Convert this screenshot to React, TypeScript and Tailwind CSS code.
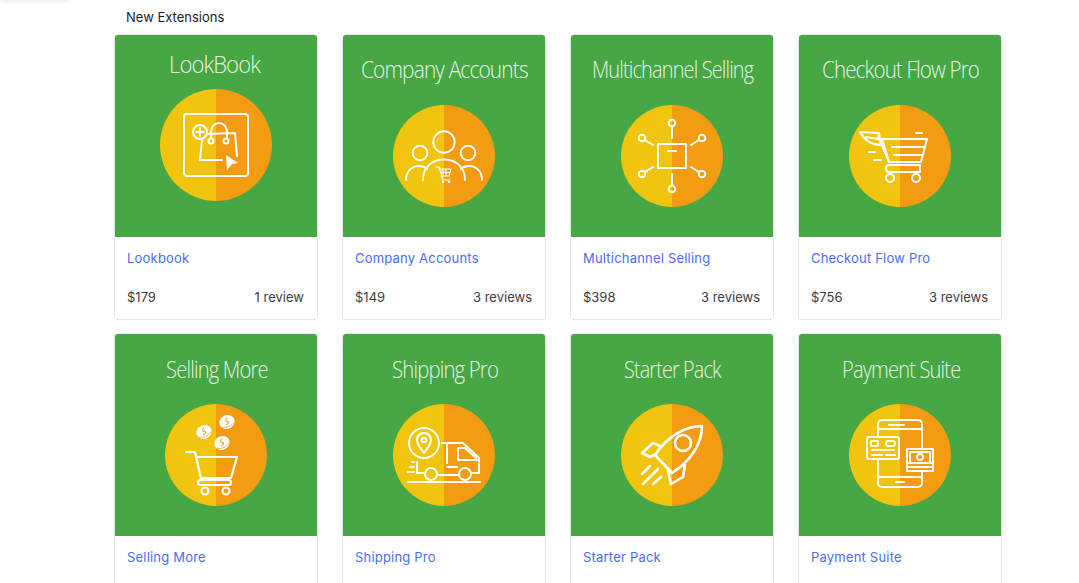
import React from "react";

const YELLOW = "#f1c40f";
const ORANGE = "#f39c12";

// ICONS (drawn around the circle's centre)
function LookBookIcon() {
  return (
    <g strokeWidth={2}>
      <rect x={-32} y={-31} width={64} height={62} rx={3} />
      <path d="M-9 -11 L19 -12 L21 11 M6 15 L-16 15 L-14 -5" />
      <circle cx={-16} cy={-13} r={7} fill={YELLOW} />
      <path d="M-20 -13 H-12 M-16 -17 V-9" />
      <path d="M-5 -7 V-12 C-5 -19 -1 -22 3 -22 C7 -22 11 -19 11 -12 V-7" />
      <circle cx={-5} cy={-4} r={2.5} />
      <circle cx={10} cy={-4} r={2.5} />
      <path d="M10 10 L22 18 L16 19 L11 25 Z" fill="#fff" stroke="none" />
    </g>
  );
}

function CompanyIcon() {
  return (
    <g strokeWidth={1.9}>
      <circle cx={0} cy={-14} r={10.7} />
      <circle cx={-24} cy={-3} r={7.3} />
      <circle cx={24} cy={-3} r={7.3} />
      <path d="M-21 24 C-21 11 -12 3.5 0 3.5 C12 3.5 21 11 21 24" />
      <path d="M-38 24 C-38 15 -32 10 -25 10 C-22 10 -19 11 -17 13" />
      <path d="M38 24 C38 15 32 10 25 10 C22 10 19 11 17 13" />
      <g strokeWidth={1.1}>
        <path d="M-8 11 H-5 L-1 24 H6" />
        <path d="M-5 13 H7 L5 20 H-3 M-3 16.5 H6 M-1 13 V20 M2 13 V20" />
        <circle cx={-1} cy={26} r={0.8} />
        <circle cx={5} cy={26} r={0.8} />
      </g>
    </g>
  );
}

function MultichannelIcon() {
  return (
    <g strokeWidth={2}>
      <rect x={-14} y={-12} width={28} height={24} />
      <path d="M-4 -5 H4" />
      <circle cx={0} cy={-33} r={3.3} />
      <circle cx={0} cy={33} r={3.3} />
      <circle cx={-30} cy={-18} r={3.3} />
      <circle cx={30} cy={-18} r={3.3} />
      <circle cx={-30} cy={18} r={3.3} />
      <circle cx={30} cy={18} r={3.3} />
      <path d="M0 -29 V-18 M0 18 V29 M-27 -16 L-19 -11 M27 -16 L19 -11 M-27 16 L-19 11 M27 16 L19 11" />
    </g>
  );
}

function CheckoutIcon() {
  return (
    <g strokeWidth={2}>
      <path d="M-18 -17 H27 L21 6 H-11 L-18 -17" />
      <path d="M-8 -9 H25 M-6 -1 H23" />
      <path d="M-22 -20 L-11 6" />
      <path d="M-40 -24 L-21 -23 L-19 -11 C-27 -11 -35 -15 -40 -24 Z M-34 -19 L-22 -17" />
      <path d="M-11 9 H20 V16 H-11 C-15 16 -15 9 -11 9 Z" />
      <circle cx={-10} cy={22} r={4} />
      <circle cx={16} cy={22} r={4} />
      <path d="M16 -23 H22 M-31 -4 H-25 M-26 4 H-19" />
    </g>
  );
}

function SellingIcon() {
  const coins = [
    [-12, -23],
    [11, -33],
    [6, -12],
  ];
  return (
    <g strokeWidth={2.2}>
      <path d="M-30 -3 H-21 L-15 24" />
      <path d="M-20 2 H21 L15 23 H-15" />
      <rect x={-18} y={25} width={33} height={5} rx={2.5} />
      <circle cx={-11} cy={36} r={3.5} />
      <circle cx={10} cy={36} r={3.5} />
      {coins.map(([x, y]) => (
        <g key={`${x}-${y}`} transform={`translate(${x} ${y}) rotate(-25)`}>
          <ellipse rx={7.8} ry={6.8} fill="#fff" stroke="none" />
          <path d="M1.5 -3.5 C-1 -3.5 -1 -0.8 0.5 -0.5 C2 -0.2 2 2 -1.5 2" stroke={ORANGE} strokeWidth={1} />
          <path d="M-6.5 3 C-3 5.5 3 5.5 6.5 3" stroke={ORANGE} strokeWidth={0.6} />
        </g>
      ))}
    </g>
  );
}

function ShippingIcon() {
  return (
    <g strokeWidth={2}>
      <circle cx={-20} cy={-12} r={15} />
      <path d="M-20 -2 C-24 -7 -27 -11 -27 -15 C-27 -19 -24 -22 -20 -22 C-16 -22 -13 -19 -13 -15 C-13 -11 -16 -7 -20 -2 Z" />
      <circle cx={-20} cy={-15} r={2.3} />
      <path d="M-2 -12 H19 L35 3 V18 H27" />
      <path d="M3 -12 V8 M3 12 H13" />
      <path d="M14 -7 V5 H33 M14 -7 H21 L32 3" />
      <circle cx={-13} cy={19} r={6} />
      <circle cx={21} cy={19} r={6} />
      <path d="M-7 20 H15 M-36 27 H36 M-27 7 V18 H-20" />
      <path d="M-32 7 H-30 M-34 12 H-30 M-36 17 H-30" />
    </g>
  );
}

function RocketIcon() {
  return (
    <g strokeWidth={2.6}>
      <path d="M30 -29 C15 -29 -4 -20 -17 0 L0 18 C20 5 30 -12 30 -29 Z" />
      <circle cx={11} cy={-12} r={8} />
      <path d="M-12 -9 L-19 -12 L-30 -2 L-22 2 L-16 -1" />
      <path d="M13 10 L11 22 L-1 29 L-4 16" />
      <path d="M-30 19 L-22 11 M-29 29 L-14 14 M-19 29 L-11 22" />
    </g>
  );
}

function PaymentIcon() {
  return (
    <g strokeWidth={1.9}>
      <rect x={-22} y={-35} width={44} height={67} rx={4} />
      <path d="M-22 -26 H22 M-22 22 H22 M-11 -30 H-6 M-4 -30 H4 M-4 27 H4" />
      <rect x={-33} y={-18} width={32} height={22} rx={2} fill={YELLOW} />
      <rect x={-29} y={-14} width={7} height={5} rx={1} />
      <rect x={-14} y={-14} width={9} height={5} rx={2.5} />
      <path d="M-28 -5 H-26 M-24 -5 H-22 M-20 -5 H-18 M-16 -5 H-14 M-12 -5 H-10 M-8 -5 H-6 M-28 0 H-18 M-14 0 H-5" />
      <rect x={7} y={-6} width={26} height={22} fill={ORANGE} />
      <path d="M10 7 V-3 H30 V7" />
      <circle cx={20} cy={2} r={3} />
      <path d="M8 8 H32 M8 12 H32" />
    </g>
  );
}

// THUMBNAIL
function Thumb({
  title,
  titleX,
  squeeze,
  baseline,
  radius = 51,
  cy = 121,
  icon,
}: {
  title: string;
  titleX: number;
  squeeze: number;
  baseline: number;
  radius?: number;
  cy?: number;
  icon: React.ReactNode;
}) {
  return (
    <svg viewBox="0 0 202 202" className="block w-[202px] h-[202px] bg-[#47a744]">
      <text
        transform={`translate(${titleX} ${baseline}) scale(${squeeze} 1)`}
        letterSpacing={-1}
        fill="#fff"
        fillOpacity={0.9}
        fontSize={24}
        fontWeight={300}
        className="font-['Open_Sans',sans-serif]"
      >
        {title}
      </text>
      <g transform={`translate(101 ${cy})`}>
        <path d={`M0 ${-radius} A${radius} ${radius} 0 0 0 0 ${radius} Z`} fill={YELLOW} />
        <path d={`M0 ${-radius} A${radius} ${radius} 0 0 1 0 ${radius} Z`} fill={ORANGE} />
        <g fill="none" stroke="#fff" strokeLinecap="round" strokeLinejoin="round">
          {icon}
        </g>
      </g>
    </svg>
  );
}

// DATA
const extensions = [
  { name: "Lookbook", title: "LookBook", titleX: 54, squeeze: 0.92, baseline: 38, radius: 56, cy: 110, price: "$179", reviews: "1 review", icon: <LookBookIcon /> },
  { name: "Company Accounts", title: "Company Accounts", titleX: 18, squeeze: 0.872, baseline: 43, price: "$149", reviews: "3 reviews", icon: <CompanyIcon /> },
  { name: "Multichannel Selling", title: "Multichannel Selling", titleX: 21, squeeze: 0.83, baseline: 43, price: "$398", reviews: "3 reviews", icon: <MultichannelIcon /> },
  { name: "Checkout Flow Pro", title: "Checkout Flow Pro", titleX: 23, squeeze: 0.857, baseline: 43, price: "$756", reviews: "3 reviews", icon: <CheckoutIcon /> },
  { name: "Selling More", title: "Selling More", titleX: 51, squeeze: 0.843, baseline: 44, icon: <SellingIcon /> },
  { name: "Shipping Pro", title: "Shipping Pro", titleX: 49, squeeze: 0.848, baseline: 44, icon: <ShippingIcon /> },
  { name: "Starter Pack", title: "Starter Pack", titleX: 53, squeeze: 0.822, baseline: 44, icon: <RocketIcon /> },
  { name: "Payment Suite", title: "Payment Suite", titleX: 43, squeeze: 0.837, baseline: 44, icon: <PaymentIcon /> },
];

export default function App() {
  return (
    <div className="relative h-screen overflow-hidden bg-white font-['Inter',sans-serif]">
      {/* leftover shadow of a menu above the fold */}
      <div className="absolute -top-1 left-0 w-[68px] h-1 shadow-[0_1px_4px_rgba(0,0,0,0.12)]" />

      <div className="w-[888px] ml-[114px]">
        <h2 className="h-[34px] pl-3 pt-[10px] text-[13px] leading-[15px] font-normal text-[#1b1b28]">
          New Extensions
        </h2>

        <div className="grid grid-cols-4 gap-x-6 gap-y-[13px]">
          {extensions.map((ext) => (
            <div
              key={ext.name}
              className="flex flex-col min-h-[286px] rounded border border-[#e4e6f0] overflow-hidden bg-white"
            >
              <Thumb
                title={ext.title}
                titleX={ext.titleX}
                squeeze={ext.squeeze}
                baseline={ext.baseline}
                radius={ext.radius}
                cy={ext.cy}
                icon={ext.icon}
              />
              <div className="flex flex-1 flex-col justify-between px-3 pt-[13px] pb-[14px] text-[13px] leading-4">
                <a href="#" className="text-[#4a6cf7] tracking-[0.2px]">
                  {ext.name}
                </a>
                {ext.price && (
                  <div className="flex justify-between pr-px text-[#3c3c46]">
                    <span>{ext.price}</span>
                    <span>{ext.reviews}</span>
                  </div>
                )}
              </div>
            </div>
          ))}
        </div>
      </div>
    </div>
  );
}
